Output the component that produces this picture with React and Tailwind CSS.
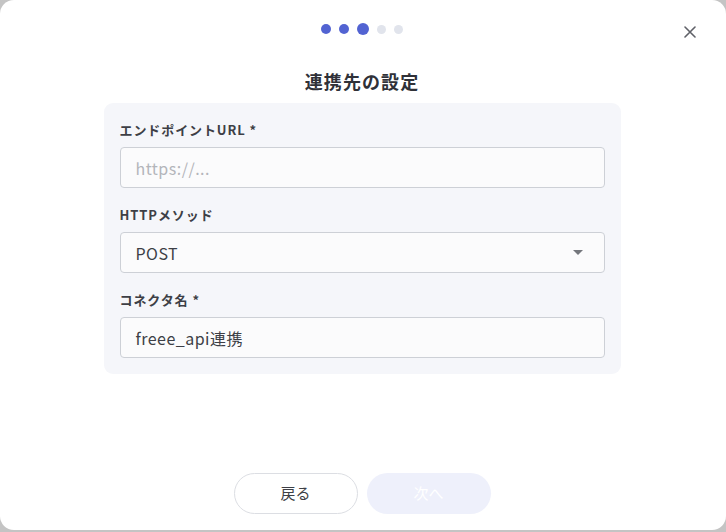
import React from 'react';

const font = { fontFamily: '"Noto Sans CJK JP", "Noto Sans", sans-serif' };

function Field({ label, children }) {
  return (
    <div className="flex flex-col">
      <label className="text-[13px] font-bold text-[#3d3f46] leading-[16px] tracking-[0.07em] mb-[9px]">
        {label}
      </label>
      {children}
    </div>
  );
}

export default function App() {
  return (
    <div className="w-[726px] h-[532px] bg-[#c4c4c4]" style={font}>
      <div className="relative w-[726px] h-[530px] bg-white rounded-[14px] flex flex-col items-center pr-[2px]">
        <button className="absolute right-[30px] top-[26px] text-[#5f6168]">
          <svg width="12" height="12" viewBox="0 0 12 12" fill="none" stroke="currentColor" strokeWidth="1.6" strokeLinecap="round">
            <path d="M1 1L11 11M11 1L1 11" />
          </svg>
        </button>

        <div className="flex items-center gap-[8px] mt-[23px] h-[12px]">
          <span className="w-[10px] h-[10px] rounded-full bg-[#5263d2]" />
          <span className="w-[10px] h-[10px] rounded-full bg-[#5263d2]" />
          <span className="w-[12px] h-[12px] rounded-full bg-[#5263d2]" />
          <span className="w-[9px] h-[9px] rounded-full bg-[#e1e4ec]" />
          <span className="w-[9px] h-[9px] rounded-full bg-[#e1e4ec]" />
        </div>

        <h1 className="mt-[34px] text-[18px] font-bold text-[#2f3138] leading-[24px] tracking-[0.06em]">
          連携先の設定
        </h1>

        <div className="mt-[10px] w-[517px] bg-[#f5f6fa] rounded-[9px] px-[16px] pt-[19px] pb-[16px] flex flex-col gap-[19px]">
          <Field label="エンドポイントURL *">
            <div className="h-[41px] border border-[#cdd0d6] rounded-[4px] bg-[#fbfbfc] flex items-center px-[15px] text-[16px] tracking-[0.03em] text-[#b3b5ba]">
              https://...
            </div>
          </Field>
          <Field label="HTTPメソッド">
            <div className="h-[41px] border border-[#cdd0d6] rounded-[4px] bg-[#fbfbfc] flex items-center justify-between pl-[15px] pr-[21px] text-[16px] tracking-[0.03em] text-[#3d3f46]">
              <span>POST</span>
              <svg width="10" height="5" viewBox="0 0 10 5">
                <path d="M0 0H10L5 5Z" fill="#74767c" />
              </svg>
            </div>
          </Field>
          <Field label="コネクタ名 *">
            <div className="h-[41px] border border-[#cdd0d6] rounded-[4px] bg-[#fbfbfc] flex items-center px-[15px] text-[16px] tracking-[0.03em] text-[#3d3f46]">
              freee_api連携
            </div>
          </Field>
        </div>

        <div className="mt-auto mb-[16px] flex gap-[9px]">
          <button className="w-[124px] h-[41px] rounded-full border border-[#dcdee3] bg-white text-[15px] text-[#3d3f46]">
            戻る
          </button>
          <button className="w-[124px] h-[41px] rounded-full bg-[#eef0fb] text-[15px] text-white">
            次へ
          </button>
        </div>
      </div>
    </div>
  );
}
